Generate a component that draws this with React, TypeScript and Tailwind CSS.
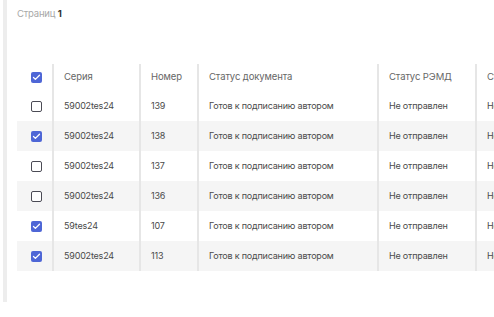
import { Check } from 'lucide-react';

interface Row {
  id: number;
  series: string;
  number: string;
  checked: boolean;
}

const rows: Row[] = [
  { id: 1, series: '59002tes24', number: '139', checked: false },
  { id: 2, series: '59002tes24', number: '138', checked: true },
  { id: 3, series: '59002tes24', number: '137', checked: false },
  { id: 4, series: '59002tes24', number: '136', checked: false },
  { id: 5, series: '59tes24', number: '107', checked: true },
  { id: 6, series: '59002tes24', number: '113', checked: true },
];

function Box({ checked }: { checked: boolean }) {
  return checked ? (
    <span className="flex h-[11px] w-[11px] items-center justify-center rounded-[2px] bg-[#4e66d6]">
      <Check size={9} strokeWidth={3.5} className="text-white" />
    </span>
  ) : (
    <span className="block h-[11px] w-[11px] rounded-[2px] border-[1.5px] border-[#4b4b55] bg-white" />
  );
}

const cell = 'border-r-2 border-[#e6e6e6] pl-[10px] flex items-center whitespace-nowrap overflow-hidden';

export default function App() {
  return (
    <div
      className="h-[317px] w-[494px] overflow-hidden bg-white"
      style={{ fontFamily: 'Inter, "Noto Sans", sans-serif' }}
    >
      <div className="ml-[3px] h-[302px] border-l-4 border-[#ededed] pl-[10px]">
        <div className="pt-[8px] text-[9.5px] leading-[12px] text-[#a8a8a8] tracking-[-0.2px]">
          Страниц <span className="font-bold text-[#333]">1</span>
        </div>

        <div className="mt-[42px] w-[620px]">
          <div className="grid h-[29px] grid-cols-[37px_87px_58px_180px_98px_160px] pt-[2px] text-[9.5px] tracking-[-0.1px] text-[#666]">
            <div className="flex items-center justify-center border-r-2 border-[#e6e6e6] pl-[3px]">
              <Box checked />
            </div>
            <div className={cell}>Серия</div>
            <div className={cell}>Номер</div>
            <div className={cell}>Статус документа</div>
            <div className={cell}>Статус РЭМД</div>
            <div className={cell}>Статус подписи</div>
          </div>
          {rows.map((r, i) => (
            <div
              key={r.id}
              className={`grid h-[30px] grid-cols-[37px_87px_58px_180px_98px_160px] text-[9px] tracking-[-0.2px] text-[#4a4a4a] ${
                i % 2 === 1 ? 'bg-[#f5f5f5]' : 'bg-white'
              }`}
            >
              <div className="flex items-center justify-center border-r-2 border-[#e6e6e6] pl-[3px]">
                <Box checked={r.checked} />
              </div>
              <div className={cell}>{r.series}</div>
              <div className={cell}>{r.number}</div>
              <div className={cell}>Готов к подписанию автором</div>
              <div className={cell}>Не отправлен</div>
              <div className={cell}>Не подписан</div>
            </div>
          ))}
        </div>
      </div>
    </div>
  );
}
